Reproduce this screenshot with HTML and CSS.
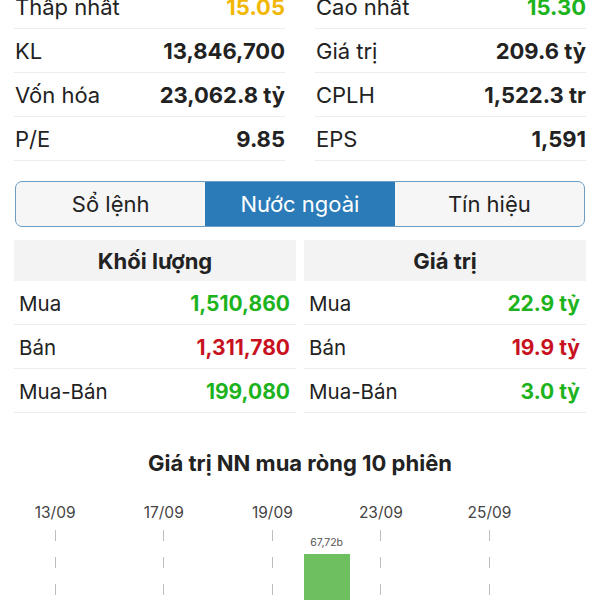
FILE: index.html
```html
<!DOCTYPE html>
<html lang="vi">
<head>
    <meta charset="UTF-8">
    <meta name="viewport" content="width=device-width, initial-scale=1.0">
    <title>Nước ngoài</title>
    <link rel="stylesheet" href="styles.css">
</head>
<body>

    <div class="summary">
        <div class="summary-col">
            <div class="stat"><span>Thấp nhất</span><b class="yellow">15.05</b></div>
            <div class="stat"><span>KL</span><b>13,846,700</b></div>
            <div class="stat"><span>Vốn hóa</span><b>23,062.8 tỷ</b></div>
            <div class="stat"><span>P/E</span><b>9.85</b></div>
        </div>
        <div class="summary-col">
            <div class="stat"><span>Cao nhất</span><b class="green">15.30</b></div>
            <div class="stat"><span>Giá trị</span><b>209.6 tỷ</b></div>
            <div class="stat"><span>CPLH</span><b>1,522.3 tr</b></div>
            <div class="stat"><span>EPS</span><b>1,591</b></div>
        </div>
    </div>

    <div class="tabs">
        <div class="tab">Sổ lệnh</div>
        <div class="tab active">Nước ngoài</div>
        <div class="tab">Tín hiệu</div>
    </div>

    <div class="foreign">
        <div class="table">
            <div class="table-head">Khối lượng</div>
            <div class="table-row"><span>Mua</span><b class="green">1,510,860</b></div>
            <div class="table-row"><span>Bán</span><b class="red">1,311,780</b></div>
            <div class="table-row"><span>Mua-Bán</span><b class="green">199,080</b></div>
        </div>
        <div class="table">
            <div class="table-head">Giá trị</div>
            <div class="table-row"><span>Mua</span><b class="green">22.9 tỷ</b></div>
            <div class="table-row"><span>Bán</span><b class="red">19.9 tỷ</b></div>
            <div class="table-row"><span>Mua-Bán</span><b class="green">3.0 tỷ</b></div>
        </div>
    </div>

    <div class="chart">
        <h2 class="chart-title">Giá trị NN mua ròng 10 phiên</h2>
        <div class="sessions">
            <div class="session"><div class="date">13/09</div><div class="plot"><div class="gridline"></div></div></div>
            <div class="session"><div class="date"></div><div class="plot"></div></div>
            <div class="session"><div class="date">17/09</div><div class="plot"><div class="gridline"></div></div></div>
            <div class="session"><div class="date"></div><div class="plot"></div></div>
            <div class="session"><div class="date">19/09</div><div class="plot"><div class="gridline"></div></div></div>
            <div class="session"><div class="date"></div><div class="plot bar-plot"><div class="bar-value">67,72b</div><div class="bar"></div></div></div>
            <div class="session"><div class="date">23/09</div><div class="plot"><div class="gridline"></div></div></div>
            <div class="session"><div class="date"></div><div class="plot"></div></div>
            <div class="session"><div class="date">25/09</div><div class="plot"><div class="gridline"></div></div></div>
            <div class="session"><div class="date"></div><div class="plot"></div></div>
        </div>
    </div>

</body>
</html>
```

FILE: styles.css
```css
body {
    margin: 0;
    height: 600px;
    overflow: hidden;
    background-color: #fff;
    color: #222;
    font-family: Inter, "Noto Sans", sans-serif;
}
.green {
    color: #1db31d;
}
.red {
    color: #c8111e;
}
.yellow {
    color: #f2b705;
}

/* summary block */
.summary {
    display: grid;
    grid-template-columns: 271px 271px;
    gap: 30px;
    padding: 0 15px 0 14px;
    margin-top: -15px;
}
.stat {
    display: flex;
    justify-content: space-between;
    align-items: center;
    height: 43px;
    border-bottom: 1px solid #ececec;
    font-size: 22px;
}
.stat span {
    padding-left: 1px;
}
.stat b {
    font-weight: 700;
}

/* tabs */
.tabs {
    display: flex;
    margin: 20px 15px 0 15px;
    height: 44px;
    border: 1.5px solid #6c9ec4;
    border-radius: 7px;
    overflow: hidden;
    background-color: #f6f6f6;
}
.tab {
    flex: 1;
    display: flex;
    align-items: center;
    justify-content: center;
    font-size: 22px;
    color: #222;
}
.tab.active {
    background-color: #2b7bb9;
    color: #fff;
}

/* foreign tables */
.foreign {
    display: grid;
    grid-template-columns: 282px 282px;
    gap: 8px;
    padding: 0 14px;
    margin-top: 13px;
}
.table-head {
    height: 41px;
    display: flex;
    align-items: center;
    justify-content: center;
    background-color: #f3f3f3;
    font-size: 22px;
    font-weight: 700;
}
.table-row {
    display: flex;
    justify-content: space-between;
    align-items: center;
    height: 41px;
    padding: 2px 6px 0 5px;
    border-bottom: 1px solid #ececec;
    font-size: 21px;
}
.table-row span {
    font-size: 20.5px;
}
.table-row b {
    font-weight: 700;
}

/* chart */
.chart-title {
    margin: 37px 0 0 0;
    text-align: center;
    font-size: 22px;
    font-weight: 700;
    line-height: 26px;
}
.sessions {
    display: grid;
    grid-template-columns: repeat(10, 54.3px);
    padding-left: 28px;
    margin-top: 28px;
}
.session {
    display: flex;
    flex-direction: column;
    align-items: center;
}
.date {
    height: 18px;
    line-height: 18px;
    font-size: 15.5px;
    color: #444;
}
.plot {
    height: 80px;
    width: 100%;
    display: flex;
    justify-content: center;
    margin-top: 8px;
}
.gridline {
    width: 1px;
    height: 100%;
    background: repeating-linear-gradient(#bdbdbd 0 11px, transparent 11px 27px);
}
.bar-plot {
    flex-direction: column;
    align-items: center;
}
.bar-value {
    margin-top: 7px;
    font-size: 10.5px;
    line-height: 12px;
    color: #555;
}
.bar {
    margin-top: 5px;
    width: 46px;
    height: 60px;
    background-color: #6dbf60;
}
```
